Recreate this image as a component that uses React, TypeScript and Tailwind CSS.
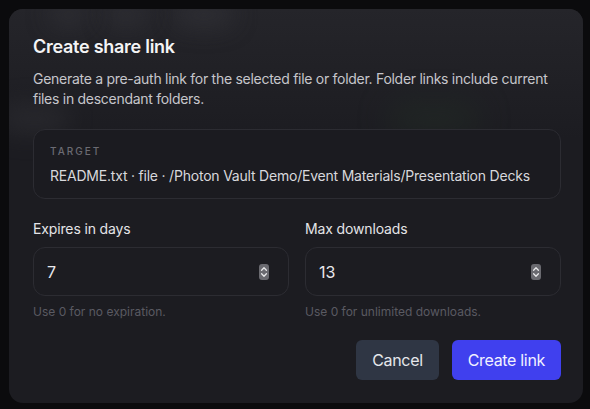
import React from "react";

function Spinner() {
  return (
    <svg width="10" height="16" viewBox="0 0 10 16" className="shrink-0">
      <rect x="0" y="0" width="10" height="16" rx="3" fill="#6a6a70" />
      <path d="M2.6 6.2 L5 3.8 L7.4 6.2" stroke="#e8e8ea" strokeWidth="1.3" fill="none" strokeLinecap="round" strokeLinejoin="round" />
      <path d="M2.6 9.8 L5 12.2 L7.4 9.8" stroke="#e8e8ea" strokeWidth="1.3" fill="none" strokeLinecap="round" strokeLinejoin="round" />
    </svg>
  );
}

function Field({ label, value, hint }: { label: string; value: string; hint: string }) {
  return (
    <div className="flex flex-col">
      <div className="text-[14px] leading-5 tracking-[-0.01em] text-[#e4e4e7]">{label}</div>
      <div className="mt-2 flex h-[49px] items-center justify-between rounded-xl border border-[#2c2c32] pl-[13px] pr-[19px]">
        <span className="text-[16px] leading-6 text-[#e8e8ec]">{value}</span>
        <Spinner />
      </div>
      <div className="mt-2 text-[12px] leading-4 text-[#5a5a62]">{hint}</div>
    </div>
  );
}

export default function App() {
  return (
    <div
      className="relative h-[409px] w-[590px] overflow-hidden bg-[#0b0b0d] py-[9px] pl-[9px]"
      style={{ fontFamily: "Inter, 'Noto Sans', sans-serif" }}
    >
      <div className="relative h-[394px] w-[574px] overflow-hidden rounded-[14px] bg-[#1c1c21]">
        {/* blurred backdrop hints */}
        <div className="pointer-events-none absolute inset-x-0 top-0 h-[130px] bg-gradient-to-b from-[#25252a] to-[#1c1c21]" />
        <div className="pointer-events-none absolute left-[40px] top-[-6px] h-[24px] w-[40px] rounded-full bg-[#34343a] opacity-60 blur-md" />
        <div className="pointer-events-none absolute left-[95px] top-[-6px] h-[24px] w-[45px] rounded-full bg-[#34343a] opacity-60 blur-md" />
        <div className="pointer-events-none absolute left-[165px] top-[-6px] h-[24px] w-[60px] rounded-full bg-[#36363c] opacity-60 blur-md" />
        <div className="pointer-events-none absolute left-[-10px] top-[95px] h-[30px] w-[70px] rounded-full bg-[#2c2c31] opacity-70 blur-md" />
        <div className="pointer-events-none absolute left-[380px] top-[95px] h-[30px] w-[90px] rounded-full bg-[#243026] opacity-50 blur-lg" />

        <div className="relative flex flex-col pl-6 pr-[22px] pt-6">
          <h2 className="text-[18px] font-semibold leading-7 tracking-[-0.015em] text-[#f4f4f5]">Create share link</h2>
          <p className="mt-2 text-[14px] leading-5 tracking-[-0.02em] text-[#c6c6cb]">
            Generate a pre-auth link for the selected file or folder. Folder links include current files in descendant folders.
          </p>

          <div className="mt-5 rounded-xl border border-[#2c2c32] bg-[#1b1b20] px-4 pb-3 pt-[14px]">
            <div className="text-[10px] font-medium uppercase leading-[14px] tracking-[0.2em] text-[#6b6b73]">Target</div>
            <div className="mt-2 whitespace-nowrap text-[14px] leading-5 tracking-[-0.015em] text-[#d8d8dc]">
              README.txt · file · /Photon Vault Demo/Event Materials/Presentation Decks
            </div>
          </div>

          <div className="mt-5 grid grid-cols-2 gap-4">
            <Field label="Expires in days" value="7" hint="Use 0 for no expiration." />
            <Field label="Max downloads" value="13" hint="Use 0 for unlimited downloads." />
          </div>

          <div className="mt-5 flex justify-end gap-[13px]">
            <button className="h-10 rounded-md bg-[#2f3644] px-4 text-[16px] tracking-[-0.02em] text-[#e5e7eb]">Cancel</button>
            <button className="h-10 rounded-md bg-[#4040ee] px-4 text-[16px] tracking-[-0.02em] text-[#f1f1ff]">Create link</button>
          </div>
        </div>
      </div>
    </div>
  );
}
